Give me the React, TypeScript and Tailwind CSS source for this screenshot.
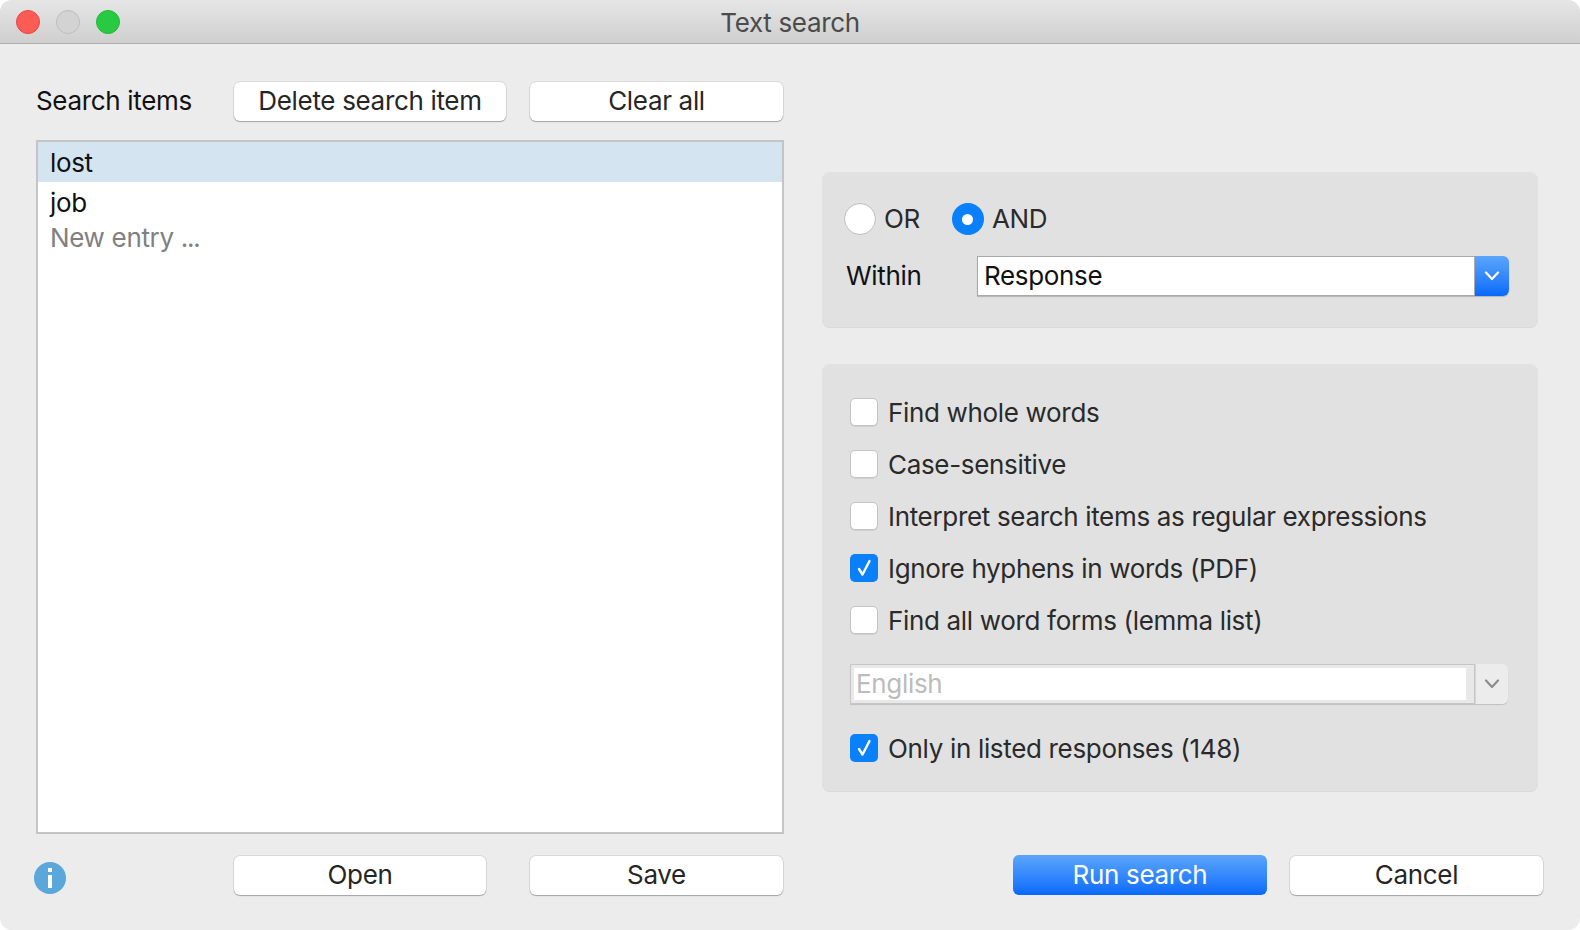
import * as React from 'react';

const font = "font-['Inter','Liberation_Sans',sans-serif]";

function Btn({ label, className }: { label: string; className: string }) {
  return (
    <button className={`h-[39px] rounded-[6px] bg-white pb-[2px] text-[26px] leading-none text-[#262626] shadow-[0_0_0_1px_rgba(0,0,0,0.08),0_1px_1px_0_rgba(0,0,0,0.25)] ${className}`}>
      {label}
    </button>
  );
}

function Chevron({ color }: { color: string }) {
  return (
    <svg width="16" height="10" viewBox="0 0 16 10" fill="none">
      <path d="M2 1.5 L8 8 L14 1.5" stroke={color} strokeWidth="2.2" strokeLinecap="round" strokeLinejoin="round" />
    </svg>
  );
}

function CheckRow({ label, checked }: { label: string; checked?: boolean }) {
  return (
    <div className="flex h-[28px] items-center">
      {checked ? (
        <span className="flex h-[28px] w-[28px] items-center justify-center rounded-[5px] bg-[#0a80fb]">
          <svg width="18" height="20" viewBox="0 0 18 20" fill="none">
            <path d="M4 11 L7.5 16.5 L14.5 3" stroke="white" strokeWidth="2.4" strokeLinecap="round" strokeLinejoin="round" />
          </svg>
        </span>
      ) : (
        <span className="h-[28px] w-[28px] rounded-[5px] border border-[#c4c4c4] bg-white shadow-[0_1px_0_rgba(0,0,0,0.08)]" />
      )}
      <span className="ml-[10px] whitespace-nowrap pt-[2px] text-[26px] leading-none text-[#2a2a2a]">{label}</span>
    </div>
  );
}

export default function App() {
  return (
    <div className={`h-[930px] w-[1580px] bg-white tracking-[-0.33px] ${font}`}>
      <div className="flex h-full flex-col overflow-hidden rounded-[12px] bg-[#ececec]">
        <div className="relative flex h-[44px] shrink-0 items-center justify-center border-b border-[#aeaeae] bg-gradient-to-b from-[#e6e6e6] to-[#cfcfcf] pt-[2px]">
          <div className="absolute left-[16px] top-[10px] flex gap-[16px]">
            <span className="h-[24px] w-[24px] rounded-full border border-[#e5483f] bg-[#fd5c55]" />
            <span className="h-[24px] w-[24px] rounded-full border border-[#bdbdbd] bg-[#d3d3d3]" />
            <span className="h-[24px] w-[24px] rounded-full border border-[#22b73b] bg-[#27ca40]" />
          </div>
          <span className="text-[26px] leading-none text-[#4b4b4b]">Text search</span>
        </div>

        <div className="flex flex-1 pl-[36px]">
          <div className="flex w-[748px] flex-col pt-[38px]">
            <div className="flex h-[39px] items-center">
              <span className="w-[198px] pb-[2px] text-[26px] leading-none text-[#111]">Search items</span>
              <Btn label="Delete search item" className="w-[272px]" />
              <Btn label="Clear all" className="ml-[24px] w-[253px]" />
            </div>
            <div className="mt-[19px] h-[694px] border-2 border-[#c4c4c4] bg-white text-[26px] leading-none">
              <div className="flex h-[40px] items-center bg-[#d4e4f1] pl-[12px] pt-[2px] text-[#111]">lost</div>
              <div className="flex h-[40px] items-center pl-[12px] pt-[2px] text-[#111]">job</div>
              <div className="flex h-[30px] items-center pl-[12px] pt-[2px] text-[#808080]">
                <span>New entry <span className="tracking-[-1.2px]">...</span></span>
              </div>
            </div>
            <div className="mt-[22px] flex h-[39px] items-center">
              <svg width="32" height="32" viewBox="0 0 32 32" className="-ml-[2px] mt-[5px]">
                <circle cx="16" cy="16" r="16" fill="#5aa7db" />
                <rect x="14" y="6" width="4" height="4" fill="white" />
                <rect x="14" y="13" width="4" height="13" fill="white" />
              </svg>
              <Btn label="Open" className="ml-[168px] w-[252px]" />
              <Btn label="Save" className="ml-[44px] w-[253px]" />
            </div>
          </div>

          <div className="ml-[38px] flex w-[721px] flex-col pt-[128px]">
            <div className="h-[155px] w-[716px] rounded-[8px] bg-[#e1e1e1] pl-[22px] pr-[29px] pt-[31px] shadow-[0_1px_0_rgba(0,0,0,0.08)]">
              <div className="flex h-[32px] items-center">
                <span className="h-[32px] w-[32px] rounded-full border border-[#bdbdbd] bg-white" />
                <span className="ml-[8px] text-[26px] leading-none text-[#2a2a2a]">OR</span>
                <span className="ml-[32px] flex h-[32px] w-[32px] items-center justify-center rounded-full bg-[#0a80fb]">
                  <span className="h-[11px] w-[11px] rounded-full bg-white" />
                </span>
                <span className="ml-[8px] text-[26px] leading-none text-[#2a2a2a]">AND</span>
              </div>
              <div className="mt-[21px] flex h-[40px] items-center">
                <span className="w-[133px] pl-[2px] text-[26px] leading-none text-[#111]">Within</span>
                <div className="flex h-[40px] flex-1 rounded-r-[6px] shadow-[0_1px_1px_rgba(0,0,0,0.2)]">
                  <div className="flex flex-1 items-center border border-[#a9a9a9] bg-white pl-[6px] text-[26px] leading-none text-[#111]">Response</div>
                  <div className="flex w-[34px] items-center justify-center rounded-r-[6px] bg-gradient-to-b from-[#5aa5fb] to-[#0569fb]">
                    <Chevron color="white" />
                  </div>
                </div>
              </div>
            </div>

            <div className="mt-[37px] h-[427px] w-[716px] rounded-[8px] bg-[#e1e1e1] pl-[28px] pr-[30px] pt-[34px] shadow-[0_1px_0_rgba(0,0,0,0.08)]">
              <div className="flex flex-col gap-[24px]">
                <CheckRow label="Find whole words" />
                <CheckRow label="Case-sensitive" />
                <CheckRow label="Interpret search items as regular expressions" />
                <CheckRow label="Ignore hyphens in words (PDF)" checked />
                <CheckRow label="Find all word forms (lemma list)" />
              </div>
              <div className="mt-[30px] flex h-[40px] rounded-r-[6px] shadow-[0_1px_1px_rgba(0,0,0,0.15)]">
                <div className="flex flex-1 items-center border border-[#c6c6c6] bg-[#e8e8e8] py-[3px] pl-[3px] pr-[8px]">
                  <div className="flex h-full flex-1 items-center bg-white pl-[2px] text-[26px] leading-none text-[#bcbcbc]">English</div>
                </div>
                <div className="flex w-[33px] items-center justify-center rounded-r-[6px] border-l border-[#d6d6d6] bg-[#ececec]">
                  <Chevron color="#8d8d8d" />
                </div>
              </div>
              <div className="mt-[30px]">
                <CheckRow label="Only in listed responses (148)" checked />
              </div>
            </div>

            <div className="mt-[64px] flex pl-[191px]">
              <button className="h-[40px] w-[254px] rounded-[6px] bg-gradient-to-b from-[#5aa5fb] to-[#0569fb] text-[26px] leading-none text-white">Run search</button>
              <Btn label="Cancel" className="ml-[23px] mt-[1px] w-[253px]" />
            </div>
          </div>
        </div>
      </div>
    </div>
  );
}
